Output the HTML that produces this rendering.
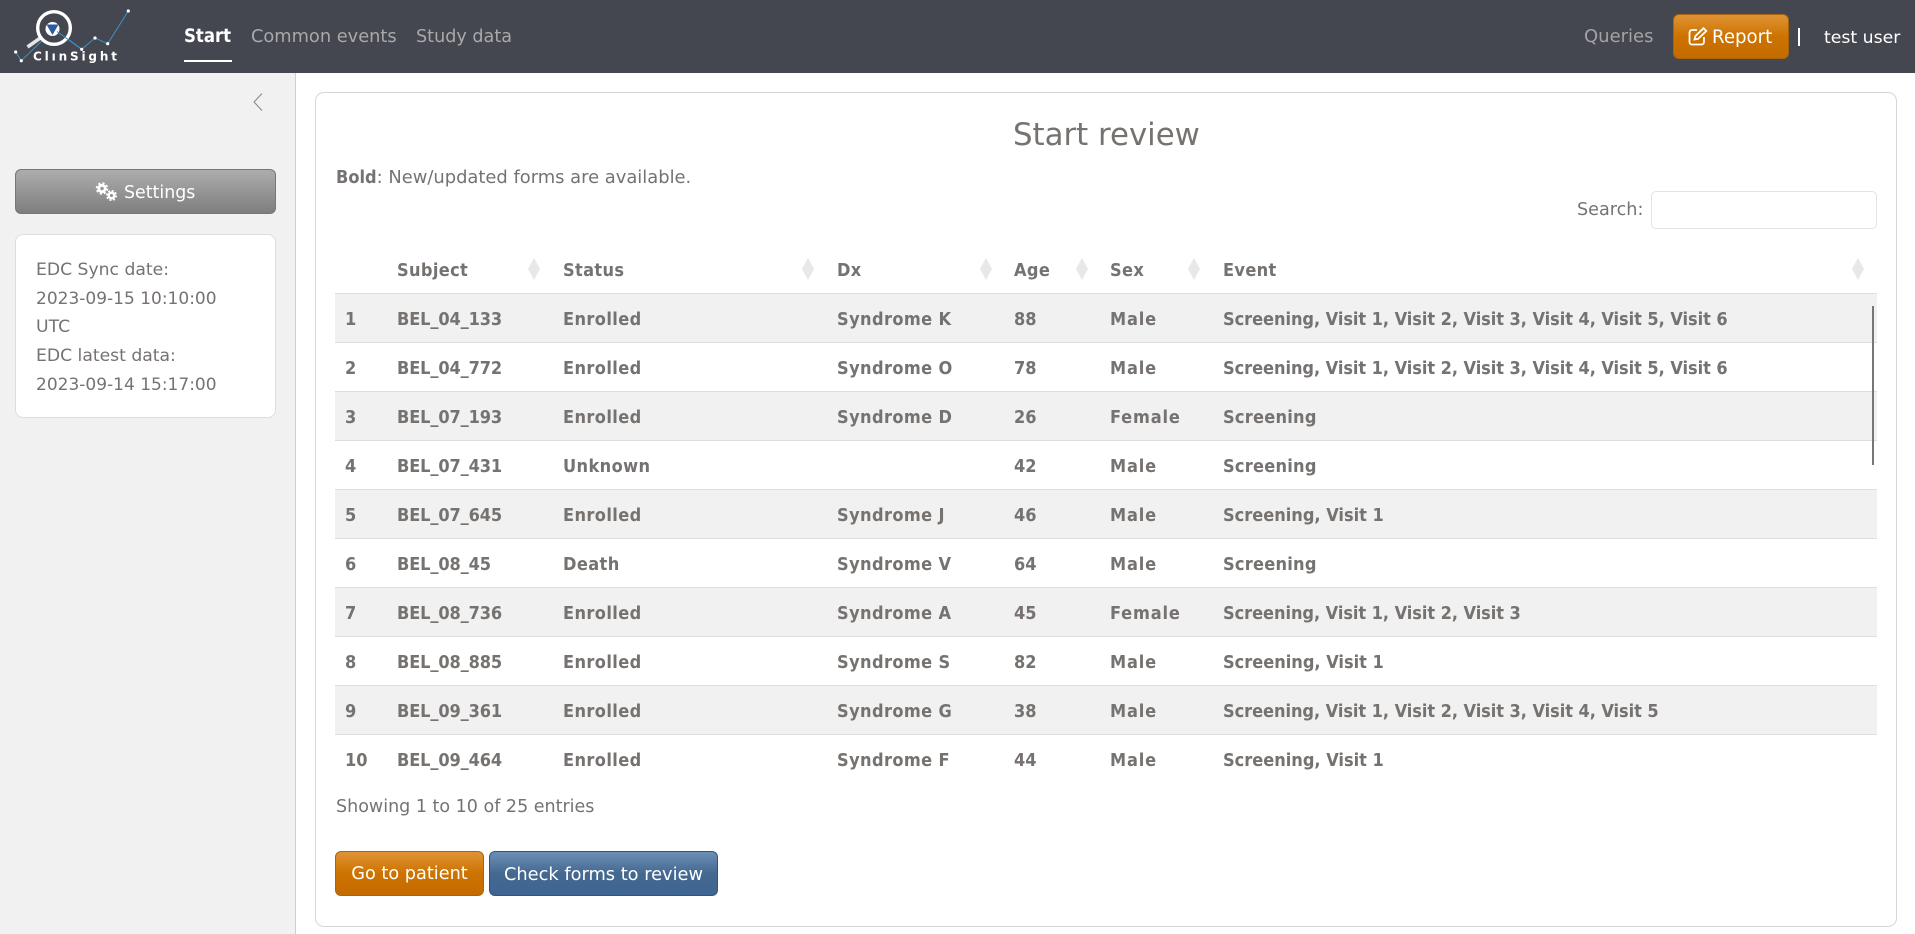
<!DOCTYPE html>
<html lang="en"><head><meta charset="utf-8"><title>ClinSight</title>
<style>
html,body{margin:0;padding:0;width:1915px;height:934px;overflow:hidden;background:#fff}
body{position:relative;font-family:"DejaVu Sans","Liberation Sans",sans-serif;font-size:17.500px;color:#767270}
.t{position:absolute;white-space:nowrap;line-height:24px;height:24px;margin-top:1px}
.b,b{font-weight:bold;font-stretch:condensed;font-size:18px}
.h{letter-spacing:.35px}
.s{letter-spacing:.4px}
.x{letter-spacing:.4px}
.g{letter-spacing:.85px}
.e{letter-spacing:.25px}
.f{letter-spacing:0}
.l{letter-spacing:-.05px}
.i{letter-spacing:-.12px}
.box{position:absolute;box-sizing:border-box}
.row{position:absolute;left:335px;width:1542px;height:49px;box-sizing:border-box;border-bottom:1.5px solid #dedede}
.row.o{background:#f1f1f1}
.d{position:absolute;width:12px;height:22px;top:258px;background:#e8e8e8;clip-path:polygon(50% 0,100% 50%,50% 100%,0 50%)}
.btn{position:absolute;box-sizing:border-box;color:#fff;text-align:center;border-radius:6px}
</style></head><body>
<div class="box" style="left:0;top:0;width:1915px;height:73px;background:#444750"></div>
<svg style="position:absolute;left:0;top:0" width="140" height="73" viewBox="0 0 140 73">
<polyline points="15.7,52 21.3,60.7 50,33" fill="none" stroke="#3f8fc4" stroke-width="1"/>
<polyline points="60,33 81.7,49.3 95,38 107.7,43.7 128.3,11" fill="none" stroke="#3f8fc4" stroke-width="1"/>
<path d="M27.5 47 L41 37.5" stroke="#e4e4e4" stroke-width="3.6" fill="none"/>
<circle cx="54" cy="28" r="16.3" fill="#444750" stroke="#fff" stroke-width="3.4"/>
<circle cx="52.5" cy="29" r="7" fill="#fff"/>
<path d="M46.500 24.500 H58.500 L52.500 35 Z" fill="#2c5aa0"/>
<polyline points="57,31.5 81.7,49.3" fill="none" stroke="#3f8fc4" stroke-width="1"/>
<g fill="#fff"><circle cx="15.7" cy="52" r="1.6"/><circle cx="21.3" cy="60.7" r="1.6"/><circle cx="81.7" cy="49.3" r="1.6"/><circle cx="95" cy="38" r="1.6"/><circle cx="107.7" cy="43.7" r="1.6"/><circle cx="128.3" cy="11" r="1.6"/></g>
<text x="33" y="60.5" font-family="DejaVu Sans, sans-serif" font-weight="bold" font-size="12" fill="#fff" textLength="84">ClınSight</text>
</svg>
<div class="t b" style="left:184px;top:24px;font-size:18.400px;color:#fff">Start</div>
<div class="box" style="left:184px;top:60px;width:48px;height:2px;background:#fff"></div>
<div class="t" style="left:251px;top:24px;font-size:17.800px;color:#a9a9a9">Common events</div>
<div class="t" style="left:416px;top:24px;font-size:17.600px;color:#a9a9a9">Study data</div>
<div class="t" style="left:1584px;top:24px;font-size:18px;color:#a3a3a3">Queries</div>
<div class="btn" style="left:1673px;top:14px;width:116px;height:45px;border:1px solid #a9640f;background:linear-gradient(#e09335,#cd7300 50%,#c46b00)"></div>
<svg style="position:absolute;left:1688px;top:27px" width="20" height="19" viewBox="0 0 20 19" fill="none" stroke="#fff" stroke-width="1.8"><path d="M9 3H4a2.5 2.5 0 0 0-2.5 2.5v9.500A2.500 2.500 0 0 0 4 17.500h9.500a2.500 2.500 0 0 0 2.500-2.500V10"/><path d="M6.500 12.500l.8-3.300L15.500 1.200l2.800 2.800-8.300 7.900z"/></svg>
<div class="t" style="left:1712px;top:25px;font-size:18.200px;color:#fff">Report</div>
<div class="box" style="left:1798px;top:28px;width:1.500px;height:18px;background:#fff"></div>
<div class="t" style="left:1824px;top:25px;font-size:17.300px;color:#fff">test user</div>

<div class="box" style="left:0;top:73px;width:296px;height:861px;background:#f1f1f1;border-right:1.500px solid #cfcfcf"></div>
<svg style="position:absolute;left:252px;top:92px" width="12" height="20" viewBox="0 0 12 20"><path d="M10 1.500L2 10l8 8.500" fill="none" stroke="#8a8a8a" stroke-width="1.100"/></svg>
<div class="btn" style="left:15px;top:169px;width:261px;height:45px;border:1px solid #777;background:linear-gradient(#adadad,#7e7e7e)"></div>
<svg style="position:absolute;left:95px;top:182px" width="24" height="22" viewBox="0 0 24 22">
<g fill="none" stroke="#fff"><circle cx="7" cy="6.500" r="3.200" stroke-width="2.800"/><circle cx="7" cy="6.500" r="5.300" stroke-width="1.900" stroke-dasharray="2.200 2"/><circle cx="16.500" cy="13.500" r="2.800" stroke-width="2.500"/><circle cx="16.500" cy="13.500" r="4.700" stroke-width="1.700" stroke-dasharray="2 1.700"/></g></svg>
<div class="t" style="left:124px;top:180px;font-size:17.400px;color:#fff">Settings</div>
<div class="box" style="left:15px;top:234px;width:261px;height:184px;background:#fff;border:1px solid #ddd;border-radius:8px"></div>
<div class="t" style="left:36px;top:257px;font-size:17.200px">EDC Sync date:</div>
<div class="t" style="left:36px;top:286px;font-size:17px">2023-09-15 10:10:00</div>
<div class="t" style="left:36px;top:314px;font-size:17.200px">UTC</div>
<div class="t" style="left:36px;top:343px;font-size:17.200px">EDC latest data:</div>
<div class="t" style="left:36px;top:372px;font-size:17px">2023-09-14 15:17:00</div>

<div class="box" style="left:315px;top:92px;width:1582px;height:835px;border:1.500px solid #d6d6d6;border-radius:9px"></div>
<div class="t" style="left:1013px;top:116px;font-size:30.800px;line-height:36px;height:36px">Start review</div>
<div class="t" style="left:336px;top:165px;font-size:17.900px"><b>Bold</b>: New/updated forms are available.</div>
<div class="t" style="left:1577px;top:197px;font-size:17.600px">Search:</div>
<div class="box" style="left:1651px;top:191px;width:226px;height:38px;border:1.500px solid #e4e4e4;border-radius:5px"></div>

<div class="t b h" style="left:397px;top:258px">Subject</div><div class="d" style="left:528px"></div>
<div class="t b h" style="left:563px;top:258px">Status</div><div class="d" style="left:802px"></div>
<div class="t b h" style="left:837px;top:258px">Dx</div><div class="d" style="left:980px"></div>
<div class="t b h" style="left:1014px;top:258px">Age</div><div class="d" style="left:1076px"></div>
<div class="t b h" style="left:1110px;top:258px">Sex</div><div class="d" style="left:1188px"></div>
<div class="t b h" style="left:1223px;top:258px">Event</div><div class="d" style="left:1852px"></div>
<div class="box" style="left:335px;top:292.500px;width:1542px;height:1.500px;background:#dedede"></div>

<div class="row o" style="top:294px"></div>
<div class="row" style="top:343px"></div>
<div class="row o" style="top:392px"></div>
<div class="row" style="top:441px"></div>
<div class="row o" style="top:490px"></div>
<div class="row" style="top:539px"></div>
<div class="row o" style="top:588px"></div>
<div class="row" style="top:637px"></div>
<div class="row o" style="top:686px"></div>

<div class="t b" style="left:345px;top:307px">1</div><div class="t b i" style="left:397px;top:307px">BEL_04_133</div><div class="t b s" style="left:563px;top:307px">Enrolled</div><div class="t b x" style="left:837px;top:307px">Syndrome K</div><div class="t b" style="left:1014px;top:307px">88</div><div class="t b g" style="left:1110px;top:307px">Male</div><div class="t b l" style="left:1223px;top:307px">Screening, Visit 1, Visit 2, Visit 3, Visit 4, Visit 5, Visit 6</div>
<div class="t b" style="left:345px;top:356px">2</div><div class="t b i" style="left:397px;top:356px">BEL_04_772</div><div class="t b s" style="left:563px;top:356px">Enrolled</div><div class="t b x" style="left:837px;top:356px">Syndrome O</div><div class="t b" style="left:1014px;top:356px">78</div><div class="t b g" style="left:1110px;top:356px">Male</div><div class="t b l" style="left:1223px;top:356px">Screening, Visit 1, Visit 2, Visit 3, Visit 4, Visit 5, Visit 6</div>
<div class="t b" style="left:345px;top:405px">3</div><div class="t b i" style="left:397px;top:405px">BEL_07_193</div><div class="t b s" style="left:563px;top:405px">Enrolled</div><div class="t b x" style="left:837px;top:405px">Syndrome D</div><div class="t b" style="left:1014px;top:405px">26</div><div class="t b g" style="left:1110px;top:405px">Female</div><div class="t b e" style="left:1223px;top:405px">Screening</div>
<div class="t b" style="left:345px;top:454px">4</div><div class="t b i" style="left:397px;top:454px">BEL_07_431</div><div class="t b s" style="left:563px;top:454px">Unknown</div><div class="t b" style="left:1014px;top:454px">42</div><div class="t b g" style="left:1110px;top:454px">Male</div><div class="t b e" style="left:1223px;top:454px">Screening</div>
<div class="t b" style="left:345px;top:503px">5</div><div class="t b i" style="left:397px;top:503px">BEL_07_645</div><div class="t b s" style="left:563px;top:503px">Enrolled</div><div class="t b x" style="left:837px;top:503px">Syndrome J</div><div class="t b" style="left:1014px;top:503px">46</div><div class="t b g" style="left:1110px;top:503px">Male</div><div class="t b f" style="left:1223px;top:503px">Screening, Visit 1</div>
<div class="t b" style="left:345px;top:552px">6</div><div class="t b i" style="left:397px;top:552px">BEL_08_45</div><div class="t b s" style="left:563px;top:552px">Death</div><div class="t b x" style="left:837px;top:552px">Syndrome V</div><div class="t b" style="left:1014px;top:552px">64</div><div class="t b g" style="left:1110px;top:552px">Male</div><div class="t b e" style="left:1223px;top:552px">Screening</div>
<div class="t b" style="left:345px;top:601px">7</div><div class="t b i" style="left:397px;top:601px">BEL_08_736</div><div class="t b s" style="left:563px;top:601px">Enrolled</div><div class="t b x" style="left:837px;top:601px">Syndrome A</div><div class="t b" style="left:1014px;top:601px">45</div><div class="t b g" style="left:1110px;top:601px">Female</div><div class="t b l" style="left:1223px;top:601px">Screening, Visit 1, Visit 2, Visit 3</div>
<div class="t b" style="left:345px;top:650px">8</div><div class="t b i" style="left:397px;top:650px">BEL_08_885</div><div class="t b s" style="left:563px;top:650px">Enrolled</div><div class="t b x" style="left:837px;top:650px">Syndrome S</div><div class="t b" style="left:1014px;top:650px">82</div><div class="t b g" style="left:1110px;top:650px">Male</div><div class="t b f" style="left:1223px;top:650px">Screening, Visit 1</div>
<div class="t b" style="left:345px;top:699px">9</div><div class="t b i" style="left:397px;top:699px">BEL_09_361</div><div class="t b s" style="left:563px;top:699px">Enrolled</div><div class="t b x" style="left:837px;top:699px">Syndrome G</div><div class="t b" style="left:1014px;top:699px">38</div><div class="t b g" style="left:1110px;top:699px">Male</div><div class="t b l" style="left:1223px;top:699px">Screening, Visit 1, Visit 2, Visit 3, Visit 4, Visit 5</div>
<div class="t b" style="left:345px;top:748px">10</div><div class="t b i" style="left:397px;top:748px">BEL_09_464</div><div class="t b s" style="left:563px;top:748px">Enrolled</div><div class="t b x" style="left:837px;top:748px">Syndrome F</div><div class="t b" style="left:1014px;top:748px">44</div><div class="t b g" style="left:1110px;top:748px">Male</div><div class="t b f" style="left:1223px;top:748px">Screening, Visit 1</div>

<div class="box" style="left:1872px;top:306px;width:2px;height:159px;background:#777"></div>
<div class="t" style="left:336px;top:794px">Showing 1 to 10 of 25 entries</div>
<div class="btn" style="left:335px;top:851px;width:149px;height:45px;line-height:45px;font-size:17.700px;border:1px solid #a9640f;background:linear-gradient(#e09335,#cd7300 50%,#c46b00)">Go to patient</div>
<div class="btn" style="left:489px;top:851px;width:229px;height:45px;line-height:45px;font-size:17.800px;border:1px solid #34557a;background:linear-gradient(#6b8fb6,#44688f 50%,#3e6592)">Check forms to review</div>
</body></html>
